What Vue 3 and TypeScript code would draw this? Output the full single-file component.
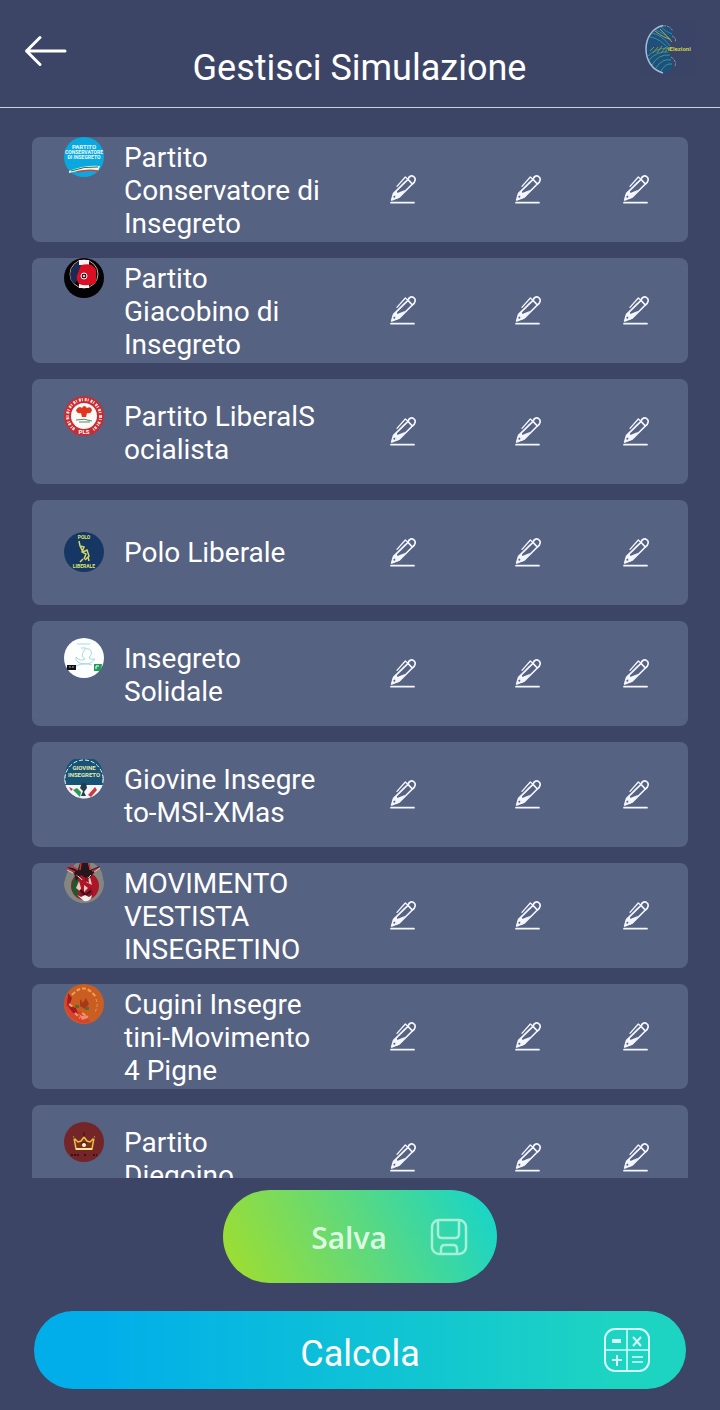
<script setup lang="ts">
type LogoKind =
  | 'conservatore'
  | 'giacobino'
  | 'socialista'
  | 'polo'
  | 'solidale'
  | 'giovine'
  | 'vestista'
  | 'pigne'
  | 'corona'

interface Party {
  logo: LogoKind
  lines: string[]
}

const parties: Party[] = [
  { logo: 'conservatore', lines: ['Partito', 'Conservatore di', 'Insegreto'] },
  { logo: 'giacobino', lines: ['Partito', 'Giacobino di', 'Insegreto'] },
  { logo: 'socialista', lines: ['Partito LiberalS', 'ocialista'] },
  { logo: 'polo', lines: ['Polo Liberale'] },
  { logo: 'solidale', lines: ['Insegreto', 'Solidale'] },
  { logo: 'giovine', lines: ['Giovine Insegre', 'to-MSI-XMas'] },
  { logo: 'vestista', lines: ['MOVIMENTO', 'VESTISTA', 'INSEGRETINO'] },
  { logo: 'pigne', lines: ['Cugini Insegre', 'tini-Movimento', '4 Pigne'] },
  { logo: 'corona', lines: ['Partito', 'Diegoino'] },
]

const fields: string[] = ['nome', 'voti', 'seggi']
</script>

<template>
  <div class="screen">
    <header class="header">
      <button class="back" type="button" aria-label="Indietro">
        <svg viewBox="0 0 44 32" width="44" height="32" aria-hidden="true">
          <path d="M41 16H3M16 2.500L2.500 16L16 29.500" fill="none" stroke="#fff" stroke-width="3" stroke-linecap="round" stroke-linejoin="round" />
        </svg>
      </button>
      <h1 class="title">Gestisci Simulazione</h1>
      <svg class="brand" viewBox="0 0 54 54" width="54" height="54" role="img" aria-label="iElezioni">
        <rect width="54" height="54" fill="#3a4466" />
        <path d="M23 4C11 6 5 16 5 27s6 22 18 24c4 0 6-2 8-4c2-9-3-12-3-20s5-12 3-18c-2-3-5-5-8-5z" fill="#1f4f7a" />
        <g fill="none" stroke-width="1">
          <path d="M9 15q10 1 21 14M11 11q10 2 18 13M15 8q8 3 15 10M20 5q5 5 11 7" stroke="#2c8fa8" />
          <path d="M14 9q9 7 15 8M19 7q6 6 12 13" stroke="#b0a255" />
          <path d="M7 34q8-8 20-8M8 38q8-9 19-8M11 43q6-11 18-10M15 46q6-10 15-8M20 49q4-8 11-7" stroke="#2f9c92" />
          <path d="M9 29l4-4M12 31l5-6M16 31l5-7M20 31l5-6M24 30l3-4" stroke="#938f45" />
          <path d="M22 3.500C11 6 5 16 5 27s6 21 17 24" stroke="#a8bdd4" stroke-width="1.500" />
          <path d="M22 4q6-1 10 5M31 14q5 2 3 6M30 35q6 4 4 9" stroke="#7f93b2" stroke-dasharray="3 1" />
        </g>
        <text x="27" y="29" font-size="6" font-weight="700" fill="#d0cc48" font-family="Roboto, sans-serif">iElezioni</text>
      </svg>
    </header>

    <main class="list-area">
      <ul class="list">
        <li v-for="party in parties" :key="party.logo" class="row">
          <div class="party">
            <svg class="logo" viewBox="0 0 40 40" width="40" height="40" aria-hidden="true">
              <g v-if="party.logo === 'conservatore'">
                <circle cx="20" cy="20" r="20" fill="#09a9df" />
                <g class="tiny" font-size="6" fill="#eefaff">
                  <text x="20" y="12">PARTITO</text>
                  <text x="20" y="17" font-size="5">CONSERVATORE</text>
                  <text x="20" y="22" font-size="5">DI INSEGRETO</text>
                </g>
                <path d="M5 34q15-6 31-5l-2 5q-14-3-29 2z" fill="#f4f4ee" />
                <path d="M7 34q13-5 27-4" fill="none" stroke="#286f46" />
                <path d="M13 35q11-3 21-1" fill="none" stroke="#d0423c" stroke-width="1.500" />
              </g>
              <g v-else-if="party.logo === 'giacobino'">
                <circle cx="20" cy="20" r="20" fill="#030306" />
                <circle cx="20" cy="16" r="14" fill="none" stroke="#d9a394" />
                <path d="M17 3A14 14 0 0 0 10 26L20 16z" fill="#1b2a53" />
                <path d="M15 2h10v5H15zM15 26h10v4H15z" fill="#f7f4f2" />
                <path d="M17 7q12-3 15 5v13q-9 4-17 1q-4-6-1-11z" fill="#d90f23" />
                <circle cx="20" cy="18" r="3" fill="#45131c" stroke="#fff" stroke-width="1" />
                <circle cx="20" cy="18" r="1" fill="#fff" />
              </g>
              <g v-else-if="party.logo === 'socialista'">
                <circle cx="20" cy="20" r="20" fill="#c62e36" />
                <circle cx="20" cy="20" r="16.500" fill="none" stroke="#f7dedd" stroke-width="3" stroke-dasharray="2 1 1 2" />
                <path d="M11 33h18v6H11z" fill="#c62e36" />
                <circle cx="20" cy="20" r="13" fill="#fbf8f6" />
                <path d="M12 14q3-5 6-2q2-4 5 0q4-2 5 2q-1 4-5 3l-1 4h-4l-1-4q-4 1-5-3z" fill="#e3361f" />
                <path d="M12 24q8-2 16 1M15 26h11" fill="none" stroke="#57886f" stroke-width="1" />
                <text class="tiny" x="20" y="38" font-size="6" fill="#fff">PLS</text>
              </g>
              <g v-else-if="party.logo === 'polo'">
                <circle cx="20" cy="20" r="20" fill="#163763" />
                <g class="tiny" font-size="5" fill="#dfe36b">
                  <text x="20" y="7">POLO</text>
                  <text x="20" y="36">LIBERALE</text>
                </g>
                <path d="M15 9l1 5l4 1l-2 5l4 2l-2 5M16 14l3 6l4-2l2 6l-4 4M19 27l-3 3M24 25l1 4" fill="none" stroke="#d5d86a" stroke-width="1.500" />
              </g>
              <g v-else-if="party.logo === 'solidale'">
                <circle cx="20" cy="20" r="20" fill="#fdfefe" />
                <path d="M13 6h13M17 10h5M20 13q-4 5 1 8q-5 3-9-2q-1 6 8 7q8 0 11-5q-5 1-6-1q5-6 0-9q-5-1-5 2zM12 28q8-4 16-1" fill="none" stroke="#a9d9df" />
                <path d="M3 27h9v5H3z" fill="#111" />
                <path d="M5 29h5" stroke="#aaa" stroke-dasharray="2 1" />
                <path d="M30 26h8q0 4-2 7h-6z" fill="#1f9c58" />
                <path d="M32 31v-3h3" fill="none" stroke="#fff" />
              </g>
              <g v-else-if="party.logo === 'giovine'">
                <circle cx="20" cy="20" r="19.500" fill="#f3f5f6" />
                <path d="M1 26V16A19 19 0 0 1 39 16V26z" fill="#175377" />
                <circle cx="20" cy="20" r="19" fill="none" stroke="#e6eef0" stroke-width="1" stroke-dasharray="4 2" />
                <g class="tiny" font-size="6" fill="#e8e7a9">
                  <text x="20" y="11">GIOVINE</text>
                  <text x="20" y="18">INSEGRETO</text>
                </g>
                <path d="M9 31l7 7l1-5l-4-4z" fill="#2e9659" />
                <path d="M24 36l7-8l2 3l-6 7zM5 28l4 2l-2 2z" fill="#c93b40" />
                <path d="M18 24h4l1 5l-3 4l2 4h-5l2-5l-3-3zM28 28l7 5" fill="#263b4e" />
              </g>
              <g v-else-if="party.logo === 'vestista'">
                <path d="M3 10Q8 3 13 0H29Q36 4 38 10L40 20A20 20 0 0 1 0 20Z" fill="#84877f" />
                <circle cx="21" cy="23" r="14" fill="#ad1528" />
                <path d="M15 11A14 14 0 0 0 14 35z" fill="#21572f" />
                <path d="M3 4l11 2l2-6h8l2 7l10-4l-8 9l-3 5l-8-5l-5 6l-2-8z" fill="#25181c" />
                <path d="M2 5l9 4M6 2l8 5M17 0l-1 7M25 0l1 7M28 8l8-3M12 12l7 5" stroke="#c9323c" stroke-width="1.500" />
                <path d="M3 7l6 3M30 9l6-4M14 13l4 4M27 12l-4 4" stroke="#e8c9c4" />
                <path d="M15 18l-3 7l5 4v-4zM26 14l-4 5l6 3zM20 22l4 3l-4 4z" fill="#efc6bd" />
                <path d="M24 13l1 7l-5-3zM17 25l5 6l5-7l2 7l-7 6l-6-4z" fill="#8d1524" />
                <path d="M16 27l5 5l6-4" fill="none" stroke="#31121a" stroke-width="2" />
                <path d="M13 32l4 2l4-2l4 2l3-2q-1 7-8 6z" fill="#f5eeee" />
              </g>
              <g v-else-if="party.logo === 'pigne'">
                <circle cx="20" cy="20" r="20" fill="#c95d22" />
                <path d="M2 12A20 20 0 0 0 27 38L18 28L9 25z" fill="#d74330" />
                <path d="M4 9l4 5l-3 8l7 2l2 6l-5-1l-6-8z" fill="#a91822" />
                <path d="M8 11Q20-3 32 13M11 29l5 5M5 20l4 3M18 29l6 4" fill="none" stroke="#eea052" stroke-width="2" stroke-dasharray="4 2" />
                <path d="M32 15q3 8-2 14" fill="none" stroke="#e39a58" stroke-dasharray="3 2" />
                <path d="M16 15l3 4l3-5l3 6l-4 5l-5-3z" fill="#a93719" />
                <path d="M11 21h4v3h-4zM21 23h4v3h-4z" fill="#5f6a2a" />
                <path d="M15 30l3 2l4-1l2 3l-6 2z" fill="#f28a72" />
              </g>
              <g v-else>
                <circle cx="20" cy="20" r="20" fill="#742527" />
                <path d="M10 16l4 4l3-1l3-4l3 4l3 1l4-4l-2 11H12z" fill="#7a3218" stroke="#efbd49" stroke-width="1.500" />
                <path d="M12 27h16" stroke="#ffe49a" stroke-width="2" />
                <path d="M20 10v5M9 16h2M29 16h2M17 21h6" stroke="#2b1711" />
                <circle cx="20" cy="23" r="2" fill="#fff1dd" />
                <path d="M7 33h8M20 33h3M29 33h4" stroke="#3b1115" stroke-width="2" stroke-dasharray="2 1" />
              </g>
            </svg>
            <div class="name">
              <span v-for="line in party.lines" :key="line" class="name-line">{{ line }}</span>
            </div>
          </div>
          <button
            v-for="field in fields"
            :key="field"
            class="edit"
            type="button"
            :aria-label="`Modifica ${field} ${party.lines.join(' ')}`"
          >
            <svg viewBox="0 0 78 87" width="26" height="29" aria-hidden="true">
              <g fill="none" stroke="#f4f7ff" stroke-width="5" stroke-linecap="round" stroke-linejoin="round">
                <path d="M3 83H72" />
                <path d="M11 55L54 13L67 27L28 66L5 75Z" />
                <path d="M54 13C57 2 66 1 71 5C78 10 77 20 67 27" />
                <path d="M21 34L46 6L52 11" stroke-width="4" />
                <path d="M27 39L44 21" stroke-width="3" />
              </g>
              <path d="M10 55L20 45L22 54L46 44L28 67L20 72L18 64L12 60Z" fill="#f4f7ff" />
              <path d="M5 76L9 57L24 68Z" fill="#f4f7ff" />
              <circle cx="13" cy="65" r="3" fill="#566281" />
            </svg>
          </button>
        </li>
      </ul>
    </main>

    <footer class="actions">
      <button class="save" type="button">
        <span class="save-label">Salva</span>
        <svg class="save-icon" viewBox="0 0 38 38" width="38" height="38" aria-hidden="true">
          <g fill="none" stroke="#a5f0d6" stroke-width="2.500" stroke-linejoin="round">
            <rect x="2" y="2" width="34" height="34" rx="7" />
            <path d="M8 2V16Q8 20 12 20H25Q29 20 29 16V2" />
            <path d="M11 36V31Q11 27 15 27H23Q27 27 27 31V36" />
          </g>
        </svg>
      </button>
      <button class="calc" type="button">
        <span class="calc-label">Calcola</span>
        <svg class="calc-icon" viewBox="0 0 46 46" width="46" height="46" aria-hidden="true">
          <g fill="none" stroke="#d5fff8" stroke-width="2">
            <rect x="1" y="2" width="44" height="42" rx="10" />
            <path d="M23 2V44M1 23H45" stroke-width="1.500" />
            <path d="M8 14H17" stroke-width="4" />
            <path d="M29 10L37 19M37 10L29 19" />
            <path d="M8 33H18M13 28V39" />
            <path d="M28 30H39M28 35H39" stroke-width="1.500" />
          </g>
        </svg>
      </button>
    </footer>
  </div>
</template>

<style>
body {
  margin: 0;
  background: #3d4566;
}
</style>

<style scoped>
.screen {
  display: flex;
  flex-direction: column;
  height: 100vh;
  background: #3d4566;
  color: #fff;
  font-family: Roboto, "Liberation Sans", sans-serif;
}

button {
  margin: 0;
  padding: 0;
  border: 0;
  background: none;
  color: inherit;
  font: inherit;
  cursor: pointer;
}

svg {
  display: block;
}

.header {
  display: grid;
  grid-template-columns: 54px 1fr 54px;
  align-items: start;
  flex: none;
  padding: 22px 25px 0 24px;
  min-height: 85px;
  border-bottom: 1px solid #ccd1df;
}

.back {
  width: 44px;
  margin-top: 13px;
}

.title {
  margin: 24px 0 0;
  font-size: 36px;
  font-weight: 400;
  line-height: 44px;
  text-align: center;
}

.list-area {
  flex: 1;
  min-height: 0;
  overflow: hidden;
  padding: 29px 32px 0;
}

.list {
  display: flex;
  flex-direction: column;
  gap: 16px;
  margin: 0;
  padding: 0;
  list-style: none;
}

.row {
  display: grid;
  grid-template-columns: 308fr 126fr 124fr 92fr;
  align-items: center;
  min-height: 105px;
  padding-right: 6px;
  border-radius: 8px;
  background: #566281;
}

.party {
  display: flex;
  align-items: flex-start;
  gap: 20px;
  padding: 2px 0 0 32px;
}

.logo {
  flex: none;
  margin-top: -4px;
}

.tiny {
  font-family: Roboto, sans-serif;
  font-weight: 700;
  text-anchor: middle;
}

.name {
  font-size: 28px;
  line-height: 33px;
  white-space: nowrap;
}

.name-line {
  display: block;
}

.edit {
  display: flex;
  align-items: center;
  justify-content: center;
  height: 64px;
}

.actions {
  display: flex;
  flex-direction: column;
  align-items: center;
  flex: none;
  gap: 28px;
  padding: 12px 34px 21px;
}

.save,
.calc {
  display: grid;
  align-items: center;
  border-radius: 48px;
}

.save {
  grid-template-columns: 1fr 38px;
  width: 42%;
  height: 93px;
  padding: 0 29px 0 45px;
  background: linear-gradient(65deg, #98dd38 8%, #62d978 48%, #1bd5c5 94%);
}

.save-label {
  padding-top: 2px;
  color: #dcfbe2;
  font-family: "Open Sans", "Noto Sans", sans-serif;
  font-size: 30px;
  font-weight: 600;
}

.calc {
  grid-template-columns: 46px 1fr 46px;
  width: 100%;
  height: 78px;
  padding: 0 36px;
  background: linear-gradient(90deg, #02aeea 10%, #12c6d1 60%, #1dd3c2 88%);
}

.calc-label {
  grid-column: 2;
  padding-top: 8px;
  font-size: 36px;
}
</style>
